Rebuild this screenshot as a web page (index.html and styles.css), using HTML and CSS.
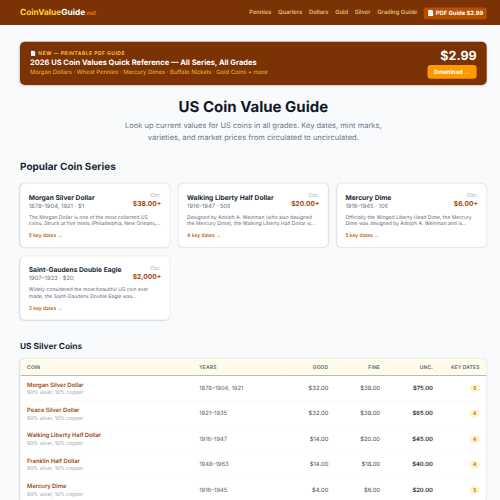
FILE: index.html
```html
<!DOCTYPE html>
<html lang="en">
<head>
<meta charset="utf-8">
<title>US Coin Value Guide</title>
<link rel="stylesheet" href="styles.css">
</head>
<body>
<div class="viewport">
<div class="page">
  <header class="site-header">
    <div class="logo"><span class="logo-accent">CoinValue</span>Guide<span class="logo-tld">.net</span></div>
    <nav class="nav">
      <a>Pennies</a><a>Quarters</a><a>Dollars</a><a>Gold</a><a>Silver</a><a>Grading Guide</a>
      <a class="nav-cta">📄 PDF Guide $2.99</a>
    </nav>
  </header>
  <main class="main">
    <section class="promo">
      <div>
        <div class="promo-eyebrow">📄 NEW — PRINTABLE PDF GUIDE</div>
        <div class="promo-title">2026 US Coin Values Quick Reference — All Series, All Grades</div>
        <div class="promo-sub">Morgan Dollars · Wheat Pennies · Mercury Dimes · Buffalo Nickels · Gold Coins + more</div>
      </div>
      <div class="promo-buy">
        <div class="promo-price">$2.99</div>
        <a class="promo-button">Download <span class="arrow">→</span></a>
      </div>
    </section>
    <section class="hero">
      <h1>US Coin Value Guide</h1>
      <p>Look up current values for US coins in all grades. Key dates, mint marks, varieties, and market prices from circulated to uncirculated.</p>
    </section>
    <h2 class="section-title">Popular Coin Series</h2>
    <div class="cards">
      <article class="card">
        <div class="card-head">
          <div><h3>Morgan Silver Dollar</h3><div class="card-years">1878–1904, 1921 · $1</div></div>
          <div class="card-value"><div class="card-grade">Circ.</div><div class="card-price">$38.00+</div></div>
        </div>
        <p class="card-text">The Morgan Dollar is one of the most collected US<br>coins. Struck at five mints (Philadelphia, New Orleans,…</p>
        <div class="card-link">5 key dates <span class="arrow">→</span></div>
      </article>
      <article class="card">
        <div class="card-head">
          <div><h3>Walking Liberty Half Dollar</h3><div class="card-years">1916–1947 · 50¢</div></div>
          <div class="card-value"><div class="card-grade">Circ.</div><div class="card-price">$20.00+</div></div>
        </div>
        <p class="card-text">Designed by Adolph A. Weinman (who also designed<br>the Mercury Dime), the Walking Liberty Half Dollar is…</p>
        <div class="card-link">4 key dates <span class="arrow">→</span></div>
      </article>
      <article class="card">
        <div class="card-head">
          <div><h3>Mercury Dime</h3><div class="card-years">1916–1945 · 10¢</div></div>
          <div class="card-value"><div class="card-grade">Circ.</div><div class="card-price">$6.00+</div></div>
        </div>
        <p class="card-text">Officially the Winged Liberty Head Dime, the Mercury<br>Dime was designed by Adolph A. Weinman and is…</p>
        <div class="card-link">5 key dates <span class="arrow">→</span></div>
      </article>
      <article class="card">
        <div class="card-head">
          <div><h3>Saint-Gaudens Double Eagle</h3><div class="card-years">1907–1933 · $20</div></div>
          <div class="card-value"><div class="card-grade">Circ.</div><div class="card-price">$2,000+</div></div>
        </div>
        <p class="card-text">Widely considered the most beautiful US coin ever<br>made, the Saint-Gaudens Double Eagle was…</p>
        <div class="card-link">3 key dates <span class="arrow">→</span></div>
      </article>
    </div>
    <h2 class="table-title">US Silver Coins</h2>
    <div class="table-wrap">
      <table>
        <colgroup><col class="c-coin"><col class="c-years"><col class="c-good"><col class="c-fine"><col class="c-unc"><col class="c-key"></colgroup>
        <thead><tr><th>COIN</th><th>YEARS</th><th class="num">GOOD</th><th class="num">FINE</th><th class="num">UNC.</th><th class="num">KEY DATES</th></tr></thead>
        <tbody>
          <tr><td><div class="coin">Morgan Silver Dollar</div><div class="metal">90% silver, 10% copper</div></td><td>1878–1904, 1921</td><td class="num mid">$32.00</td><td class="num mid">$38.00</td><td class="num strong">$75.00</td><td class="num"><span class="badge">5</span></td></tr>
          <tr><td><div class="coin">Peace Silver Dollar</div><div class="metal">90% silver, 10% copper</div></td><td>1921–1935</td><td class="num mid">$32.00</td><td class="num mid">$38.00</td><td class="num strong">$65.00</td><td class="num"><span class="badge">4</span></td></tr>
          <tr><td><div class="coin">Walking Liberty Half Dollar</div><div class="metal">90% silver, 10% copper</div></td><td>1916–1947</td><td class="num mid">$14.00</td><td class="num mid">$20.00</td><td class="num strong">$45.00</td><td class="num"><span class="badge">4</span></td></tr>
          <tr><td><div class="coin">Franklin Half Dollar</div><div class="metal">90% silver, 10% copper</div></td><td>1948–1963</td><td class="num mid">$14.00</td><td class="num mid">$18.00</td><td class="num strong">$40.00</td><td class="num"><span class="badge">4</span></td></tr>
          <tr><td><div class="coin">Mercury Dime</div><div class="metal">90% silver, 10% copper</div></td><td>1916–1945</td><td class="num mid">$4.00</td><td class="num mid">$6.00</td><td class="num strong">$20.00</td><td class="num"><span class="badge">5</span></td></tr>
        </tbody>
      </table>
    </div>
  </main>
</div>
</div>
</body>
</html>
```
FILE: styles.css
```css
* { box-sizing: border-box; margin: 0; padding: 0; }
html, body { background: #f8fafc; }
body { font-family: Inter, "Liberation Sans", sans-serif; text-rendering: geometricPrecision; }

.viewport { width: 500px; height: 500px; overflow: hidden; }

/* Desktop layout, shown at 5/12 size */
.page {
  width: 1200px;
  height: 1200px;
  overflow: hidden;
  transform: scale(0.416666);
  transform-origin: 0 0;
  background: #f8fafc;
  color: #1e2939;
  font-size: 16px;
  line-height: 24px;
}
.arrow { font-family: "Liberation Sans", sans-serif; }

.site-header {
  display: flex;
  align-items: center;
  justify-content: space-between;
  height: 60px;
  padding: 0 32px 0 48px;
  background: #7b3306;
}
.logo { padding-top: 3px; color: #fff; font-size: 20px; line-height: 28px; font-weight: 700; }
.logo-accent { color: #ffd230; }
.logo-tld { color: #f59608; font-size: 14px; font-weight: 500; }
.nav { display: flex; gap: 16px; color: #f0cc80; font-size: 14px; line-height: 20px; font-weight: 500; }
.nav a { padding-top: 1px; padding-bottom: 3px; }
.nav .nav-cta { margin: 0 0 -4px; padding: 3px 8px; border-radius: 4px; background: #bb4d00; color: #fff; font-weight: 700; letter-spacing: -0.05px; }

.main { padding: 40px 32px 0 48px; }

.promo {
  display: flex;
  align-items: center;
  justify-content: space-between;
  height: 104px;
  margin-bottom: 32px;
  padding: 0 24px;
  border-radius: 12px;
  background: #7b3306;
  box-shadow: 0 2px 5px rgba(0, 0, 0, 0.18);
}
.promo-eyebrow { color: #f5c02c; font-size: 12px; line-height: 16px; font-weight: 700; letter-spacing: 1.15px; }
.promo-title { color: #fff; font-size: 18px; line-height: 28px; font-weight: 700; }
.promo-sub { color: #f2bb28; font-size: 14px; line-height: 20px; }
.promo-buy { display: flex; flex-direction: column; align-items: flex-end; gap: 4px; }
.promo-price { color: #fff; font-size: 30px; line-height: 36px; font-weight: 700; }
.promo-button { padding: 6px 16px; border-radius: 8px; background: #fe9a00; color: #fff; font-size: 14px; line-height: 20px; font-weight: 700; }

.hero { margin-bottom: 40px; text-align: center; }
.hero h1 { margin-bottom: 12px; color: #101828; font-size: 36px; line-height: 40px; font-weight: 700; }
.hero p { max-width: 672px; margin: 0 auto; color: #6f7786; font-size: 18px; line-height: 28px; }

.section-title { margin-bottom: 24px; font-size: 24px; line-height: 32px; font-weight: 700; }
.cards { display: grid; grid-template-columns: repeat(3, 360px); gap: 20px; }
.card {
  height: 154px;
  padding: 20px;
  border: 1px solid #e5e7eb;
  border-radius: 12px;
  background: #fff;
  box-shadow: 0 1px 3px rgba(0, 0, 0, 0.12);
}
.card-head { display: flex; justify-content: space-between; height: 44px; margin-bottom: 8px; }
.card h3 { font-size: 16px; line-height: 24px; font-weight: 700; color: #1e2939; }
.card-years { color: #6a7282; font-size: 14px; line-height: 20px; }
.card-value { text-align: right; }
.card-grade { color: #99a1af; font-size: 12px; line-height: 16px; }
.card-price { color: #a24a14; font-size: 16px; line-height: 24px; font-weight: 700; }
.card-text { margin-bottom: 12px; color: #656d7d; font-size: 12px; line-height: 16px; white-space: nowrap; }
.card-link { color: #bb4d00; font-size: 12px; line-height: 16px; font-weight: 500; }

.table-title { margin: 48px 0 16px; font-size: 20px; line-height: 28px; font-weight: 700; }
.table-wrap { overflow: hidden; border: 1px solid #e5e7eb; border-radius: 12px; background: #fff; box-shadow: 0 1px 3px rgba(0, 0, 0, 0.12); }
table { width: 1118px; table-layout: fixed; border-collapse: collapse; font-size: 14px; line-height: 20px; }
.c-coin { width: 413px; }
.c-years { width: 219px; }
.c-good { width: 123px; }
.c-fine { width: 124px; }
.c-unc { width: 127px; }
.c-key { width: 112px; }
thead tr { background: #fffbeb; border-bottom: 2px solid #a8aeb8; }
th { height: 40px; padding: 0 16px; color: #5f6876; font-size: 12px; line-height: 16px; font-weight: 600; letter-spacing: 0.3px; text-align: left; white-space: nowrap; }
td { height: 61px; padding: 12px 16px; color: #5d6575; vertical-align: middle; }
tbody tr { border-bottom: 1px solid #f3f4f6; }
th.num, td.num { text-align: right; }
td.mid { color: #3f4959; }
td.strong { color: #1e2939; font-weight: 600; }
.coin { color: #a24a14; font-weight: 600; letter-spacing: -0.08px; }
.metal { color: #99a1af; font-size: 12px; line-height: 16px; }
.badge { display: inline-block; padding: 1px 8px; border-radius: 10px; background: #fef3c6; color: #bb4d00; font-size: 12px; line-height: 16px; font-weight: 500; }
```
